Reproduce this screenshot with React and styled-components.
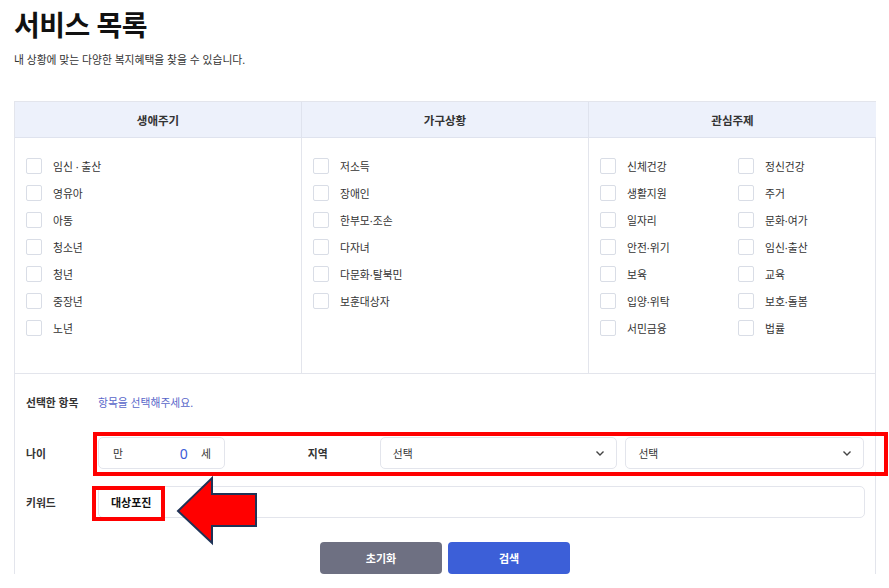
import React from "react";
import styled, { createGlobalStyle } from "styled-components";

const Global = createGlobalStyle`
  html, body { margin: 0; padding: 0; background: #fff; }
  body { font-family: "Noto Sans", "Noto Sans CJK KR", sans-serif; color: #222; }
  * { box-sizing: border-box; }
`;

const Page = styled.div`
  position: relative;
  width: 889px;
  height: 588px;
  overflow: hidden;
  padding: 0 13px 0 14px;
`;

const Title = styled.h1`
  margin: 0;
  padding-top: 5px;
  font-size: 28px;
  line-height: 40px;
  font-weight: 700;
  color: #111;
  letter-spacing: -0.5px;
`;

const Sub = styled.p`
  margin: 7px 0 0;
  font-size: 10.8px;
  line-height: 16px;
  color: #333;
`;

const Panel = styled.div`
  margin-top: 33px;
  width: 862px;
  border: 1px solid #e3e5ec;
  border-bottom: none;
`;

const Grid = styled.div`
  display: grid;
  grid-template-columns: 287px 287px 1fr;
`;

const HeadCell = styled.div`
  height: 36px;
  background: #edf1fb;
  border-bottom: 1px solid #dfe3ee;
  border-right: ${(p) => (p.$last ? "none" : "1px solid #dfe3ee")};
  display: flex;
  align-items: center;
  justify-content: center;
  font-size: 11.5px;
  font-weight: 700;
  color: #333;
`;

const BodyCell = styled.div`
  height: 236px;
  border-right: ${(p) => (p.$last ? "none" : "1px solid #e3e5ec")};
  border-bottom: 1px solid #e3e5ec;
  padding: 14px 0 0 11px;
  display: grid;
  grid-template-columns: ${(p) => (p.$two ? "138px 138px" : "1fr")};
  grid-auto-rows: 27px;
  align-content: start;
`;

const Check = styled.label`
  display: flex;
  align-items: center;
  gap: 11px;
  font-size: 10.8px;
  color: #333;
  height: 27px;
`;

const Box = styled.span`
  width: 16px;
  height: 16px;
  border: 1px solid #d9dde6;
  border-radius: 2px;
  background: #fff;
  flex: none;
`;

const Bottom = styled.div`
  padding: 0 11px;
`;

const Row = styled.div`
  display: flex;
  align-items: center;
  height: ${(p) => p.$h || 32}px;
  margin-top: ${(p) => p.$mt || 0}px;
`;

const Label = styled.div`
  width: ${(p) => p.$w || 72}px;
  flex: none;
  font-size: 10.8px;
  font-weight: 700;
  color: #333;
`;

const Hint = styled.div`
  font-size: 10.8px;
  color: #5866c9;
`;

const AgeBox = styled.div`
  width: 127px;
  height: 32px;
  border: 1px solid #e3e5ec;
  border-radius: 5px;
  display: flex;
  align-items: center;
  padding: 0 13px 0 14px;
  font-size: 10.8px;
  color: #333;
`;

const AgeNum = styled.span`
  margin-left: auto;
  margin-right: 13px;
  font-size: 14px;
  color: #3b5bd8;
`;

const RegionLabel = styled(Label)`
  margin-left: 83px;
`;

const Select = styled.div`
  width: ${(p) => p.$w}px;
  height: 32px;
  margin-left: ${(p) => p.$ml || 0}px;
  border: 1px solid #e3e5ec;
  border-radius: 5px;
  display: flex;
  align-items: center;
  justify-content: space-between;
  padding: 0 10px 0 12px;
  font-size: 10.8px;
  color: #333;
`;

const Keyword = styled.div`
  width: 767px;
  height: 32px;
  flex: none;
  border: 1px solid #e3e5ec;
  border-radius: 5px;
  display: flex;
  align-items: center;
  padding-left: 12px;
  font-size: 11px;
  font-weight: 700;
  color: #111;
`;

const Buttons = styled.div`
  display: flex;
  justify-content: center;
  gap: 6px;
  margin-top: 24px;
`;

const Btn = styled.button`
  width: 122px;
  height: 32px;
  border: none;
  border-radius: 4px;
  background: ${(p) => (p.$primary ? "#3c5fd8" : "#6e7082")};
  color: #fff;
  font-family: inherit;
  font-size: 11px;
  font-weight: 700;
`;

const RedBox = styled.div`
  position: absolute;
  border: 4px solid #ff0000;
  left: ${(p) => p.$x}px;
  top: ${(p) => p.$y}px;
  width: ${(p) => p.$w}px;
  height: ${(p) => p.$h}px;
  pointer-events: none;
`;

const ArrowSvg = styled.svg`
  position: absolute;
  left: 170px;
  top: 470px;
  pointer-events: none;
`;

const Chevron = () => (
  <svg width="12" height="12" viewBox="0 0 12 12">
    <path d="M2.5 4.5 L6 8 L9.5 4.5" fill="none" stroke="#444" strokeWidth="1.4" />
  </svg>
);

const life = ["임신 · 출산", "영유아", "아동", "청소년", "청년", "중장년", "노년"];
const house = ["저소득", "장애인", "한부모·조손", "다자녀", "다문화·탈북민", "보훈대상자"];
const topics = [
  "신체건강", "정신건강", "생활지원", "주거", "일자리", "문화·여가",
  "안전·위기", "임신·출산", "보육", "교육", "입양·위탁", "보호·돌봄", "서민금융", "법률",
];

const Item = ({ t }) => (
  <Check>
    <Box />
    {t}
  </Check>
);

export default function App() {
  return (
    <>
      <Global />
      <Page>
        <Title>서비스 목록</Title>
        <Sub>내 상황에 맞는 다양한 복지혜택을 찾을 수 있습니다.</Sub>
        <Panel>
          <Grid>
            <HeadCell>생애주기</HeadCell>
            <HeadCell>가구상황</HeadCell>
            <HeadCell $last>관심주제</HeadCell>
            <BodyCell>
              {life.map((t) => <Item key={t} t={t} />)}
            </BodyCell>
            <BodyCell>
              {house.map((t) => <Item key={t} t={t} />)}
            </BodyCell>
            <BodyCell $last $two>
              {topics.map((t) => <Item key={t} t={t} />)}
            </BodyCell>
          </Grid>
          <Bottom>
            <Row $h={30} $mt={13}>
              <Label>선택한 항목</Label>
              <Hint>항목을 선택해주세요.</Hint>
            </Row>
            <Row $mt={20}>
              <Label>나이</Label>
              <AgeBox>
                만<AgeNum>0</AgeNum>세
              </AgeBox>
              <RegionLabel>지역</RegionLabel>
              <Select $w={238}>
                선택
                <Chevron />
              </Select>
              <Select $w={239} $ml={8}>
                선택
                <Chevron />
              </Select>
            </Row>
            <Row $mt={17}>
              <Label>키워드</Label>
              <Keyword>대상포진</Keyword>
            </Row>
            <Buttons>
              <Btn>초기화</Btn>
              <Btn $primary>검색</Btn>
            </Buttons>
          </Bottom>
        </Panel>
        <RedBox $x={93} $y={432} $w={795} $h={44} />
        <RedBox $x={92} $y={486} $w={73} $h={35} />
        <ArrowSvg width="100" height="80" viewBox="0 0 100 80">
          <polygon
            points="8,41 42,8 42,24 86,24 86,56 42,56 42,73"
            fill="#ff0000"
            stroke="#1f3356"
            strokeWidth="2"
            strokeLinejoin="miter"
          />
        </ArrowSvg>
      </Page>
    </>
  );
}
